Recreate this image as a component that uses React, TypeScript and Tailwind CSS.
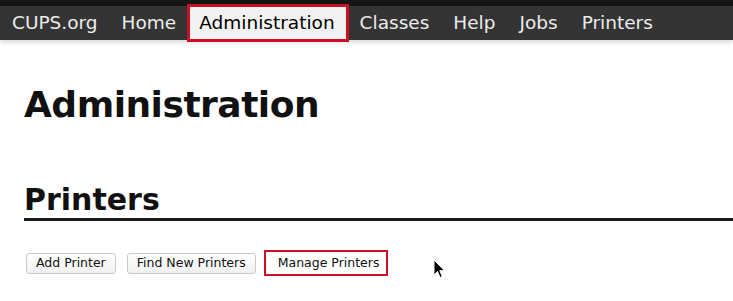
import React from 'react';

const navItems = ['CUPS.org', 'Home', 'Administration', 'Classes', 'Help', 'Jobs', 'Printers'];

export default function App() {
  const active = 'Administration';

  return (
    <div
      className="relative min-h-[301px] w-full overflow-hidden bg-[linear-gradient(to_bottom,transparent_72%,rgba(0,0,0,0.07)),linear-gradient(to_right,rgba(0,0,0,0.11),transparent_45px,transparent_calc(100%_-_55px),rgba(0,0,0,0.06)),#ffffff]"
      style={{ fontFamily: '"DejaVu Sans", Verdana, sans-serif' }}
    >
      {/* top bar */}
      <div className="bg-[#141414] pt-[6px] shadow-[0_2px_5px_rgba(0,0,0,0.18)]">
        <nav className="flex h-[34px] items-center bg-[#343434]">
          {navItems.map(item =>
            item === active ? (
              <div
                key={item}
                className="ml-[-1px] mr-[-1px] flex h-[38px] items-center border-[3px] border-[#cc0f24] bg-[#f2f2f2] pl-[9px] pr-[11px] text-[18.5px] text-black"
              >
                {item}
              </div>
            ) : (
              <div key={item} className="px-[12px] text-[18.5px] text-[#ececec]">
                {item}
              </div>
            )
          )}
        </nav>
      </div>

      {/* page */}
      <div className="pl-[24px]">
        <h1 className="mt-[45px] text-[36px] font-bold leading-[40px] tracking-[-0.5px] text-[#111]">
          Administration
        </h1>

        <h2 className="mt-[58px] border-b-[3px] border-[#1a1a1a] pb-[1px] text-[30px] font-bold leading-[34px] text-[#111]">
          Printers
        </h2>

        {/* buttons */}
        <div className="mt-[29px] flex items-center">
          <button className="ml-[2px] h-[21px] rounded-[3px] border border-[#c9c9c9] bg-[linear-gradient(#ffffff,#f1f1f1)] px-[9px] text-[12.5px] leading-none text-[#111]">
            Add Printer
          </button>
          <button className="ml-[11px] h-[21px] rounded-[3px] border border-[#c9c9c9] bg-[linear-gradient(#ffffff,#f1f1f1)] px-[9px] text-[12.5px] leading-none text-[#111]">
            Find New Printers
          </button>
          <button className="ml-[8px] h-[26px] border-[2px] border-[#cc0f24] bg-white pl-[12px] pr-[7px] text-[12.5px] leading-none text-[#111]">
            Manage Printers
          </button>
        </div>
      </div>

      {/* mouse pointer */}
      <svg
        className="absolute left-[433px] top-[259px]"
        width="13"
        height="21"
        viewBox="0 0 13 21"
      >
        <path
          d="M1 1 L1 16 L4.5 12.5 L7 18.5 L9.3 17.5 L6.8 11.7 L11.5 11.7 Z"
          fill="#000"
          stroke="#fff"
          strokeWidth="1"
          strokeLinejoin="round"
        />
      </svg>
    </div>
  );
}
